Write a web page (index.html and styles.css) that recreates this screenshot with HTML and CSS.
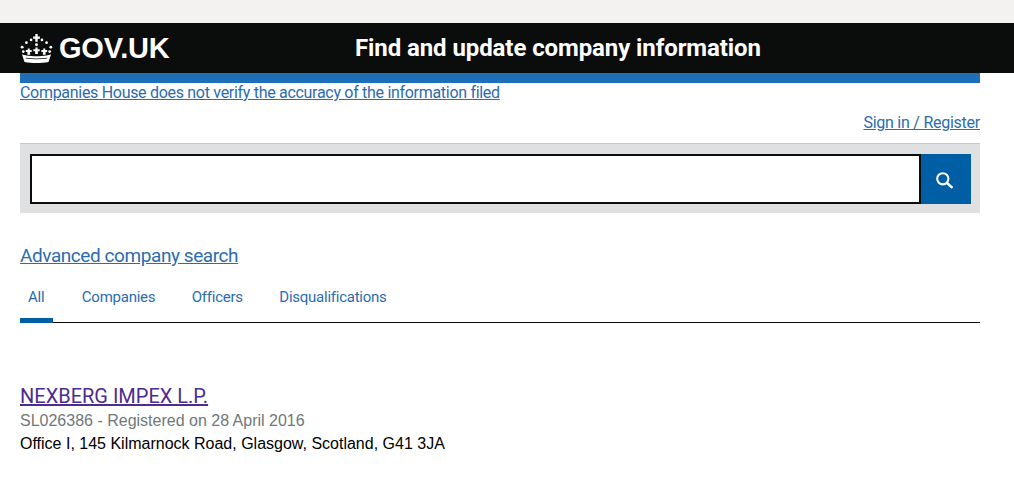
FILE: index.html
```html
<!DOCTYPE html>
<html lang="en">
<head>
    <meta charset="UTF-8">
    <title>Find and update company information - GOV.UK</title>
    <link rel="stylesheet" href="styles.css">
</head>
<body>
    <div class="cookie-strip"></div>

    <header class="site-header">
        <a class="logo" href="#">
            <svg class="crown" viewBox="0 0 34 32" width="33" height="31" aria-hidden="true">
                <g fill="#fff">
                    <path d="M15.8 1h2.4v2.6h2.3v2.4h-2.3v3h-2.4V6h-2.3V3.6h2.3z"/>
                    <circle cx="17" cy="12.2" r="1.5"/>
                    <circle cx="11.4" cy="7.2" r="1.4"/>
                    <circle cx="22.6" cy="7.2" r="1.4"/>
                    <circle cx="6.6" cy="10" r="1.4"/>
                    <circle cx="27.4" cy="10" r="1.4"/>
                    <circle cx="2.2" cy="14.6" r="1.5"/>
                    <circle cx="31.8" cy="14.6" r="1.5"/>
                    <circle cx="3.4" cy="19.2" r="1.4"/>
                    <circle cx="30.6" cy="19.2" r="1.4"/>
                    <path d="M15.9 15h2.2v1.8h2.2v2h-1.9v3h-2.8v-3h-1.9v-2h2.2z"/>
                    <path d="M8 16h2v1.6h2v2h-1.6v2.8H7.6v-2.8H6v-2h2z"/>
                    <path d="M24 16h2v1.6h2v2h-1.6v2.8h-2.8v-2.8H22v-2h2z"/>
                    <path d="M2 22c2 .8 3.2 1 4.6 1.2 3 .5 7 .7 10.4.7s7.4-.2 10.4-.7c1.4-.2 2.6-.4 4.6-1.2l-2.6 8c-4 .8-8 1-12.4 1s-8.4-.2-12.4-1zM6 26.4c3.6.6 7.4.7 11 .7s7.4-.1 11-.7v-.9c-3.6.6-7.4.7-11 .7s-7.4-.1-11-.7z" fill-rule="evenodd"/>
                </g>
            </svg>
            <span class="logo-text">GOV.UK</span>
        </a>
        <a class="service-name" href="#">Find and update company information</a>
    </header>

    <main class="page">
        <div class="phase-bar"></div>
        <p class="notice"><a href="#">Companies House does not verify the accuracy of the information filed</a></p>
        <p class="sign-in"><a href="#">Sign in / Register</a></p>

        <form class="search-band" onsubmit="return false;">
            <input class="search-input" type="text" id="site-search-text" aria-label="Search">
            <button class="search-button" type="submit" aria-label="Search">
                <svg class="search-icon" viewBox="0 0 20 20" width="19" height="19" aria-hidden="true">
                    <circle cx="8.2" cy="8.2" r="5.9" fill="none" stroke="#fff" stroke-width="2.2"/>
                    <path d="M12.6 12.6l5.8 5.2" fill="none" stroke="#fff" stroke-width="2.6"/>
                </svg>
            </button>
        </form>

        <p class="advanced"><a href="#">Advanced company search</a></p>

        <nav class="tabs">
            <a class="tab tab-active" href="#">All</a>
            <a class="tab" href="#">Companies</a>
            <a class="tab" href="#">Officers</a>
            <a class="tab" href="#">Disqualifications</a>
        </nav>

        <ul class="results">
            <li class="result">
                <h3 class="result-title"><a href="#">NEXBERG IMPEX L.P.</a></h3>
                <p class="result-meta">SL026386 - Registered on 28 April 2016</p>
                <p class="result-address">Office I, 145 Kilmarnock Road, Glasgow, Scotland, G41 3JA</p>
            </li>
        </ul>
    </main>
</body>
</html>
```

FILE: styles.css
```css
body {
    margin: 0;
    font-family: Roboto, Arial, sans-serif;
    color: #0b0c0c;
    background: #fff;
}

a {
    color: #2b6cb0;
}

.cookie-strip {
    height: 23px;
    background-color: #f3f2f1;
}

.site-header {
    height: 50px;
    background-color: #0b0c0c;
    display: flex;
    align-items: center;
    padding-left: 20px;
}

.logo {
    display: flex;
    align-items: center;
    width: 335px;
    color: #fff;
    text-decoration: none;
}

.crown {
    margin-right: 6px;
}

.logo-text {
    font-family: "Liberation Sans", Arial, sans-serif;
    font-size: 29px;
    font-weight: 700;
    letter-spacing: -0.2px;
}

.service-name {
    color: #fff;
    font-size: 24px;
    font-weight: 700;
    letter-spacing: -0.09px;
    text-decoration: none;
}

.page {
    margin: 0 34px 0 20px;
}

.phase-bar {
    height: 10px;
    background-color: #1d70b8;
}

.notice {
    margin: 0;
    font-size: 16px;
    line-height: 20px;
    letter-spacing: -0.3px;
}

.sign-in {
    margin: 10px 0 0;
    font-size: 16px;
    line-height: 20px;
    letter-spacing: -0.25px;
    text-align: right;
}

.search-band {
    display: flex;
    margin-top: 10px;
    padding: 10px 9px 9px 10px;
    background-color: #dee0e2;
    border-top: 1px solid #c8c8c8;
}

.search-input {
    flex: 1;
    height: 50px;
    padding: 0 8px;
    box-sizing: border-box;
    border: 2px solid #0b0c0c;
    background: #fff;
}

.search-button {
    width: 50px;
    height: 50px;
    padding: 0;
    border: none;
    background-color: #005ea5;
    display: flex;
    align-items: center;
    justify-content: center;
}

.search-icon {
    margin: 3px 3px 0 0;
}

.advanced {
    margin: 30px 0 0;
    font-size: 19px;
    line-height: 26px;
    letter-spacing: -0.43px;
}

.tabs {
    display: flex;
    gap: 20.5px;
    margin-top: 18px;
    border-bottom: 1px solid #0b0c0c;
}

.tab {
    padding: 0 8px 11px;
    font-size: 15px;
    line-height: 20px;
    letter-spacing: -0.25px;
    text-decoration: none;
}

.tab-active {
    padding-right: 9px;
    border-bottom: 5px solid #005ea5;
    margin-bottom: -1px;
}

.results {
    list-style: none;
    margin: 61px 0 0;
    padding: 0;
}

.result-title {
    margin: 0;
    font-size: 20px;
    font-weight: 400;
    line-height: 25px;
}

.result-title a {
    color: #4c2c92;
}

.result-meta,
.result-address {
    margin: 0;
    font-family: "Liberation Sans", Arial, sans-serif;
    font-size: 16px;
    line-height: 23px;
}

.result-meta {
    color: #6f777b;
}

.result-address {
    color: #000;
}
```
